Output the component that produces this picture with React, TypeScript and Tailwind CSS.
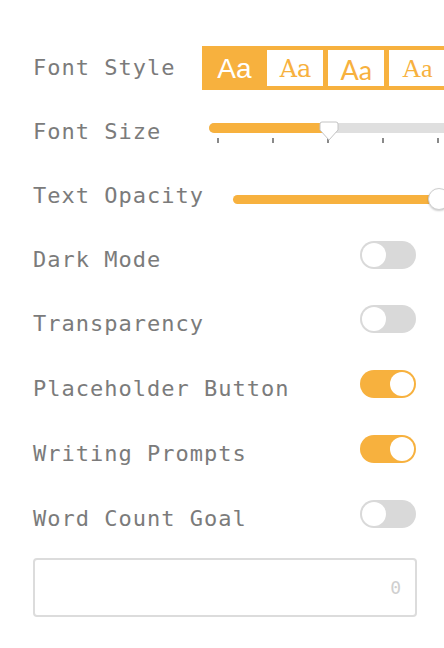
import React from "react";

const ORANGE = "bg-[#f7b13e]";

function Toggle({ on }: { on: boolean }) {
  return (
    <div
      className={
        "relative w-[56px] h-[28px] rounded-full mb-[10px] " +
        (on ? "bg-[#f7b13e]" : "bg-[#d9d9d9]")
      }
    >
      <div
        className={
          "absolute top-[2px] w-[24px] h-[24px] rounded-full bg-white " +
          (on ? "right-[2px]" : "left-[2px]")
        }
      />
    </div>
  );
}

function Label({ children }: { children: React.ReactNode }) {
  return (
    <span className="text-[22px] leading-none tracking-[1px] text-[#7b7b7b] whitespace-nowrap">
      {children}
    </span>
  );
}

export default function App() {
  return (
    <div className="w-[444px] h-[648px] overflow-hidden bg-white pl-[33px] pt-[36px] font-['DejaVu_Sans_Mono',monospace]">
      {/* Font Style */}
      <div className="flex items-center h-[64px] w-[600px]">
        <Label>Font Style</Label>
        <div className={"ml-[27px] flex gap-[5px] p-[4px] h-[44px] " + ORANGE}>
          <div className="w-[56px] h-[36px] flex items-center justify-center pt-[2px] text-white text-[28px] leading-none font-['Liberation_Sans',Arial,sans-serif]">
            Aa
          </div>
          <div className="w-[56px] h-[36px] bg-white flex items-center justify-center pt-[2px] text-[#f7b13e] text-[24px] leading-none font-medium font-['DejaVu_Serif',serif]">
            Aa
          </div>
          <div className="w-[56px] h-[36px] bg-white flex items-center justify-center pt-[2px] text-[#f7b13e] text-[27px] leading-none font-['Lato',sans-serif]">
            Aa
          </div>
          <div className="w-[56px] h-[36px] bg-white flex items-center justify-center pt-[2px] text-[#f7b13e] text-[26px] leading-none font-['Liberation_Serif',serif]">
            Aa
          </div>
        </div>
      </div>

      {/* Font Size */}
      <div className="flex items-center h-[64px] w-[600px]">
        <Label>Font Size</Label>
        <div className="ml-[48px] relative w-[260px] h-[30px] mt-[4px]">
          <div className="absolute left-0 right-0 top-[4px] h-[10px] rounded-full bg-[#dfdfdf]" />
          <div className={"absolute left-0 w-[119px] top-[4px] h-[10px] rounded-l-full " + ORANGE} />
          {[9, 64, 119, 174, 229].map((x) => (
            <div
              key={x}
              className="absolute top-[19px] w-[2px] h-[5px] bg-[#8a8a8a]"
              style={{ left: x - 1 }}
            />
          ))}
          <svg className="absolute top-[2px]" style={{ left: 110 }} width="20" height="21" viewBox="0 0 20 21">
            <path d="M3 1 H17 Q19 1 19 3 V9 L10 19 L1 9 V3 Q1 1 3 1 Z" fill="white" stroke="#c4c4c4" strokeWidth="1" />
          </svg>
        </div>
      </div>

      {/* Text Opacity */}
      <div className="flex items-center h-[64px] w-[600px]">
        <Label>Text Opacity</Label>
        <div className="ml-[29px] relative w-[240px] h-[24px] mt-[6px]">
          <div className={"absolute left-0 right-0 top-[8px] h-[9px] rounded-full " + ORANGE} />
          <div className="absolute left-[195px] top-[1px] w-[22px] h-[22px] rounded-full bg-white border border-[#cfcfcf] shadow-[0_1px_2px_rgba(0,0,0,0.2)]" />
        </div>
      </div>

      {[
        ["Dark Mode", false, 64],
        ["Transparency", false, 64],
        ["Placeholder Button", true, 65],
        ["Writing Prompts", true, 66],
        ["Word Count Goal", false, 64],
      ].map(([label, on, h]) => (
        <div
          key={label as string}
          className="flex items-center justify-between w-[383px]"
          style={{ height: h as number }}
        >
          <Label>{label as string}</Label>
          <Toggle on={on as boolean} />
        </div>
      ))}

      <div className="mt-[7px] w-[384px] h-[59px] border-2 border-[#dcdcdc] rounded-[4px] flex items-center justify-end pr-[14px]">
        <span className="text-[18px] text-[#cfcfcf]">0</span>
      </div>
    </div>
  );
}
